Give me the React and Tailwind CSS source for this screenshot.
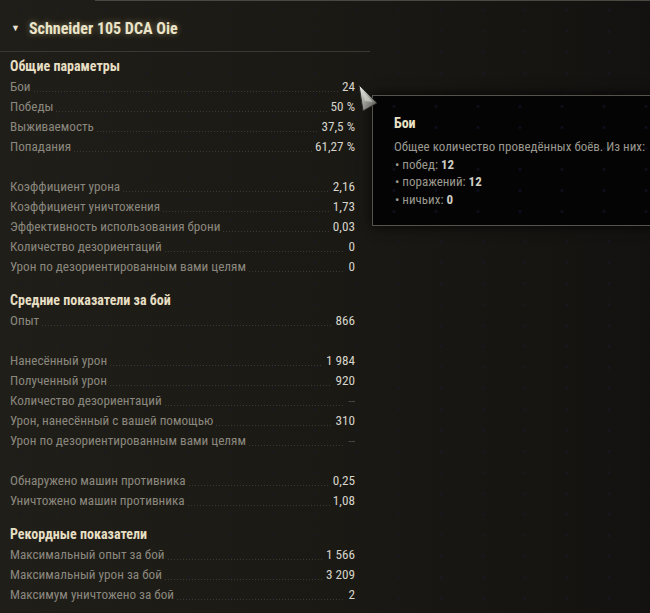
const sections = [
  {
    title: 'Общие параметры',
    first: true,
    groups: [
      [
        ['Бои', '24'],
        ['Победы', '50 %'],
        ['Выживаемость', '37,5 %'],
        ['Попадания', '61,27 %'],
      ],
      [
        ['Коэффициент урона', '2,16'],
        ['Коэффициент уничтожения', '1,73'],
        ['Эффективность использования брони', '0,03'],
        ['Количество дезориентаций', '0'],
        ['Урон по дезориентированным вами целям', '0'],
      ],
    ],
  },
  {
    title: 'Средние показатели за бой',
    groups: [
      [['Опыт', '866']],
      [
        ['Нанесённый урон', '1 984'],
        ['Полученный урон', '920'],
        ['Количество дезориентаций', '--'],
        ['Урон, нанесённый с вашей помощью', '310'],
        ['Урон по дезориентированным вами целям', '--'],
      ],
      [
        ['Обнаружено машин противника', '0,25'],
        ['Уничтожено машин противника', '1,08'],
      ],
    ],
  },
  {
    title: 'Рекордные показатели',
    groups: [
      [
        ['Максимальный опыт за бой', '1 566'],
        ['Максимальный урон за бой', '3 209'],
        ['Максимум уничтожено за бой', '2'],
      ],
    ],
  },
];

function StatRow({ label, value }) {
  const empty = value === '--';
  return (
    <div className="flex h-[20px] items-center text-[13.2px]">
      <span className="text-[#8a887e] whitespace-nowrap">{label}</span>
      <span className="flex-1 mx-[3px] self-end mb-[5px] h-px bg-[linear-gradient(to_right,#3b3930_1px,transparent_1px)] bg-[length:3px_1px]" />
      <span className={empty ? 'text-[#4f4d45]' : 'text-[#d6d4ca]'}>{value}</span>
    </div>
  );
}

function Section({ section }) {
  return (
    <div className={section.first ? 'pt-[3px]' : 'pt-[12px]'}>
      <div className="h-[22px] leading-[22px] text-[14px] font-bold text-[#e6dfc3]">
        {section.title}
      </div>
      {section.groups.map((group, gi) => (
        <div key={gi} className={gi > 0 ? 'pt-[20px]' : ''}>
          {group.map(([label, value]) => (
            <StatRow key={label + value} label={label} value={value} />
          ))}
        </div>
      ))}
    </div>
  );
}

function Cursor() {
  return (
    <svg className="absolute left-[357px] top-[84px]" width="22" height="30" viewBox="0 0 22 30">
      <defs>
        <linearGradient id="cg" x1="0" y1="0" x2="1" y2="1">
          <stop offset="0" stopColor="#f2f2ee" />
          <stop offset="0.5" stopColor="#9c9c96" />
          <stop offset="1" stopColor="#4a4a46" />
        </linearGradient>
      </defs>
      <polygon points="2,1 20,19 6,27" fill="url(#cg)" stroke="#2a2a28" strokeWidth="1" />
      <polygon points="3,4 16,18 8,17" fill="#d8d8d2" opacity="0.6" />
    </svg>
  );
}

function Tooltip() {
  return (
    <div className="absolute left-[372px] top-[95px] w-[300px] h-[131px] border border-[#55534b] bg-[#040404] shadow-[0_0_12px_rgba(0,0,0,0.8)]">
      <div className="h-full pl-[21px] pt-[17px] bg-[radial-gradient(circle,#0c0e1c_1px,transparent_2px)] bg-[length:42px_21px]">
        <div className="text-[14px] font-bold text-[#e9e2c6] leading-[20px]">Бои</div>
        <div className="mt-[5px] text-[13px] leading-[17.5px] text-[#9a988f]">
          <div className="whitespace-nowrap">Общее количество проведённых боёв. Из них:</div>
          <div className="pl-[1px]">• побед: <b className="text-[#cfcdc3]">12</b></div>
          <div className="pl-[1px]">• поражений: <b className="text-[#cfcdc3]">12</b></div>
          <div className="pl-[1px]">• ничьих: <b className="text-[#cfcdc3]">0</b></div>
        </div>
      </div>
    </div>
  );
}

export default function App() {
  return (
    <div className="relative w-[650px] h-[613px] overflow-hidden bg-[#1c1a15] font-['Roboto_Condensed',sans-serif]">
      <div className="absolute inset-0 bg-gradient-to-r from-[#201e19] via-[#1b1914] to-[#131210]" />
      <div className="absolute inset-0 bg-[radial-gradient(circle,#181a26_1px,transparent_2px)] bg-[length:42px_21px] opacity-60" />
      <div className="relative">
        <div className="h-px ml-[95px] bg-[#4a4840]" />
        <div className="w-[370px] h-[51px] flex items-center pl-[11px] pt-[5px] border-b border-[#3a3830]">
          <span className="text-[9px] text-[#e8e4d4] mr-[9px]">▼</span>
          <span className="text-[16px] font-bold text-[#ebe4c8] [text-shadow:0_0_6px_rgba(235,220,160,0.45)]">
            Schneider 105 DCA Oie
          </span>
        </div>
        <div className="w-[365px] pl-[10px] pr-[10px]">
          {sections.map(s => (
            <Section key={s.title} section={s} />
          ))}
        </div>
      </div>
      <Tooltip />
      <Cursor />
    </div>
  );
}
